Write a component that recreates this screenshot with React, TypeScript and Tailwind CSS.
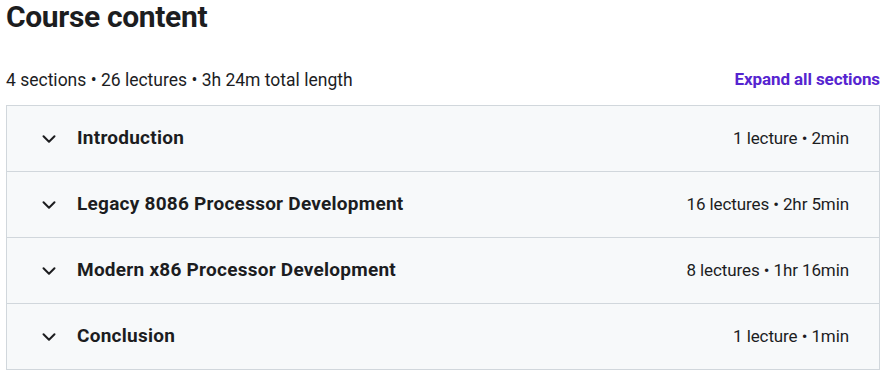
import { ChevronDown } from 'lucide-react';

const sections = [
  { title: 'Introduction', meta: '1 lecture • 2min' },
  { title: 'Legacy 8086 Processor Development', meta: '16 lectures • 2hr 5min' },
  { title: 'Modern x86 Processor Development', meta: '8 lectures • 1hr 16min' },
  { title: 'Conclusion', meta: '1 lecture • 1min' },
];

export default function App() {
  return (
    <div
      className="pl-[6px] pr-[8px] text-[#1c1d1f] bg-white min-h-[377px]"
      style={{ fontFamily: 'Roboto, "Liberation Sans", sans-serif' }}
    >
      <h2 className="text-[30px] font-bold leading-[34px] tracking-[-0.35px]">Course content</h2>

      <div className="mt-[34px] flex items-center justify-between h-[24px]">
        <span className="text-[17.5px]">4 sections • 26 lectures • 3h 24m total length</span>
        <button className="text-[17px] font-bold text-[#5624d0] tracking-[-0.1px]">Expand all sections</button>
      </div>

      {/* Section list */}
      <div className="mt-[13px] border border-[#d1d7dc]">
        {sections.map((s, i) => (
          <div
            key={s.title}
            className={`flex items-center bg-[#f7f9fa] pl-[31px] pr-[30px] ${
              i < sections.length - 1 ? 'h-[66px] border-b border-[#d1d7dc]' : 'h-[65px]'
            }`}
          >
            <ChevronDown size={22} strokeWidth={2.2} className="shrink-0" />
            <span className="ml-[17px] text-[19px] font-bold tracking-[0.25px]">{s.title}</span>
            <span className="ml-auto text-[17px] tracking-[-0.1px]">{s.meta}</span>
          </div>
        ))}
      </div>
    </div>
  );
}
